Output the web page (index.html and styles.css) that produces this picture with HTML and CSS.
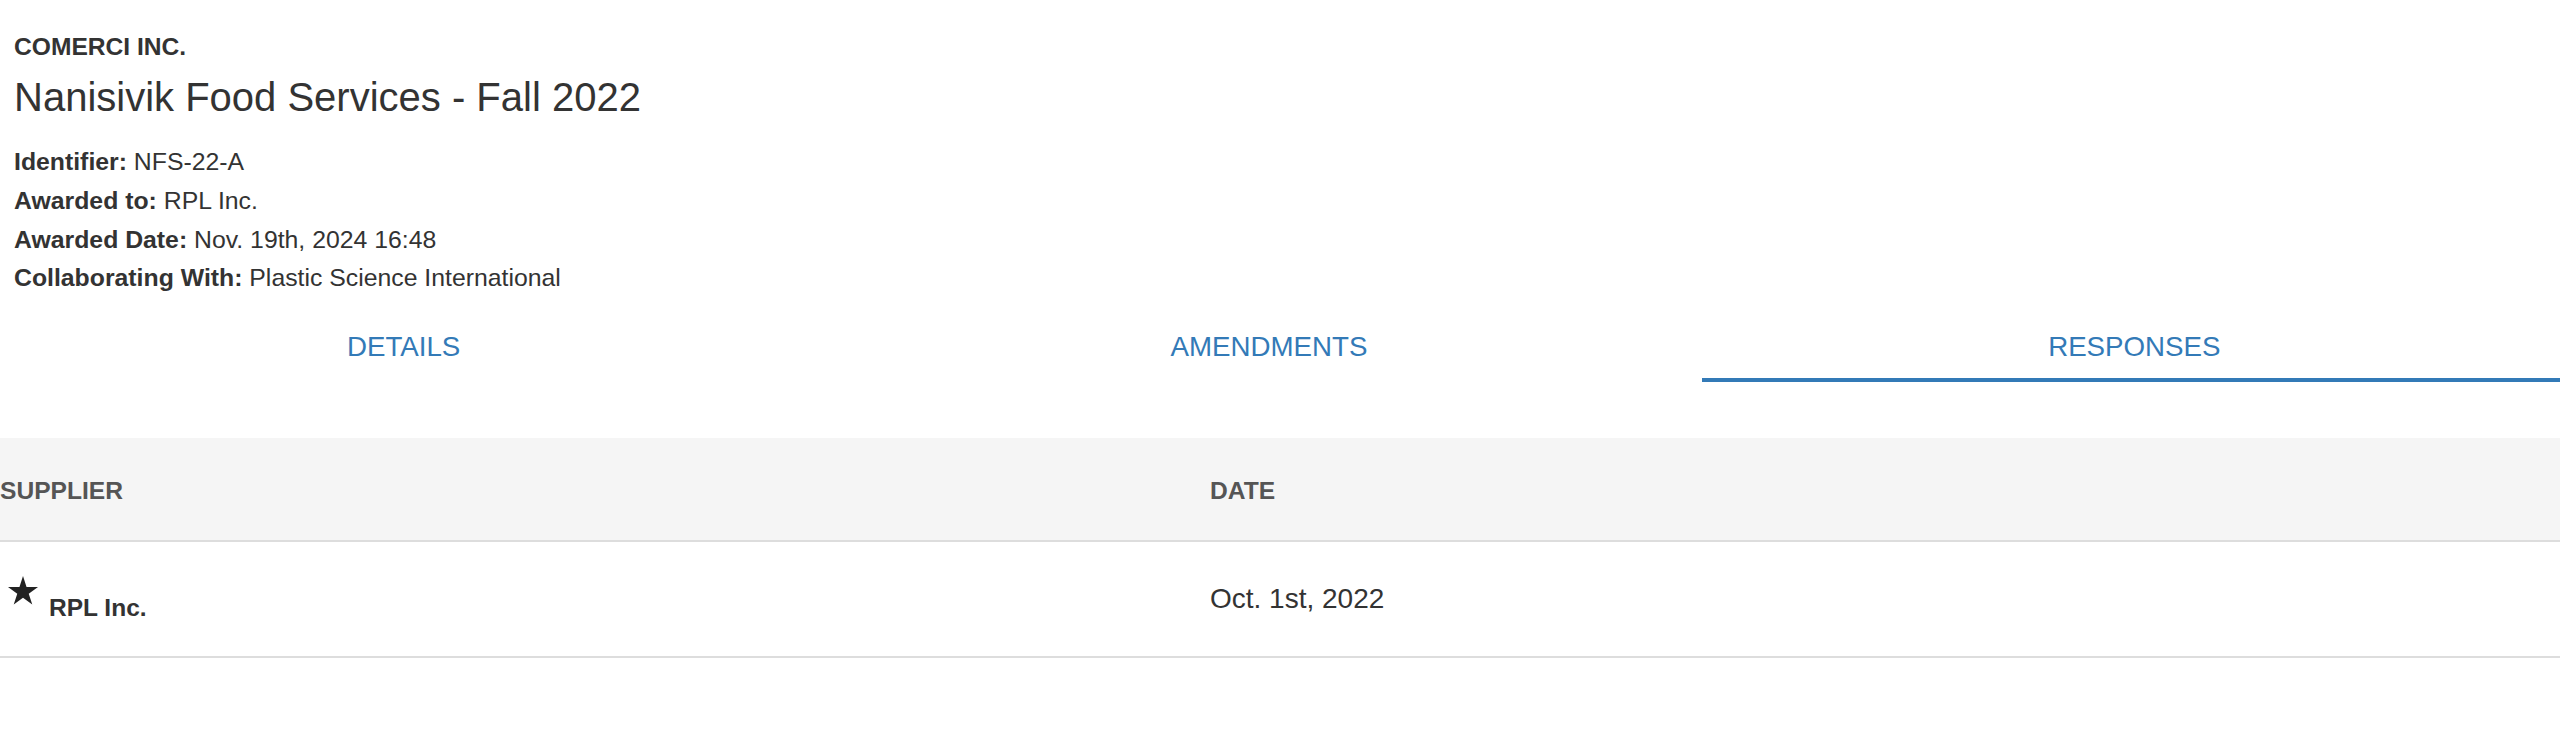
FILE: index.html
```html
<!DOCTYPE html>
<html lang="en">
<head>
<meta charset="utf-8">
<title>Nanisivik Food Services - Fall 2022</title>
<link rel="stylesheet" href="styles.css">
</head>
<body>
<div class="page">
  <header class="summary">
    <div class="company">COMERCI INC.</div>
    <h1 class="title">Nanisivik Food Services - Fall 2022</h1>
    <ul class="facts">
      <li><span class="label">Identifier:</span> NFS-22-A</li>
      <li><span class="label">Awarded to:</span> RPL Inc.</li>
      <li><span class="label">Awarded Date:</span> Nov. 19th, 2024 16:48</li>
      <li><span class="label">Collaborating With:</span> Plastic Science International</li>
    </ul>
  </header>

  <nav class="tabs">
    <a class="tab">DETAILS</a>
    <a class="tab">AMENDMENTS</a>
    <a class="tab tab-active">RESPONSES</a>
  </nav>

  <section class="table">
    <div class="table-head">
      <div class="th">SUPPLIER</div>
      <div class="th">DATE</div>
    </div>
    <div class="table-row">
      <div class="td supplier">
        <svg class="star" width="30" height="29" viewBox="0 0 30 29" aria-hidden="true">
          <polygon points="15,0 18.54,10.9 30,10.9 20.73,17.63 24.27,28.53 15,21.79 5.73,28.53 9.27,17.63 0,10.9 11.46,10.9" fill="#222"/>
        </svg>
        <span class="supplier-name">RPL Inc.</span>
      </div>
      <div class="td date">Oct. 1st, 2022</div>
    </div>
  </section>
</div>
</body>
</html>
```

FILE: styles.css
```css
html, body {
  margin: 0;
  padding: 0;
  background: #ffffff;
}

body {
  font-family: "Liberation Sans", Arial, Helvetica, sans-serif;
  color: #333333;
  overflow-x: hidden;
}

.page {
  width: 100%;
}

.summary {
  padding: 32px 0 0 14px;
}

.company {
  font-size: 24.6px;
  font-weight: bold;
  line-height: 30px;
}

.title {
  margin: 11px 0 0 0;
  font-size: 40px;
  font-weight: normal;
  line-height: 48px;
}

.facts {
  list-style: none;
  margin: 22px 0 0 0;
  padding: 0;
  font-size: 24.8px;
  line-height: 38.8px;
}

.label {
  font-weight: bold;
}

.tabs {
  display: grid;
  grid-template-columns: repeat(3, 1fr);
  width: calc(100% + 36px);
  margin: 20px 0 0 -29px;
}

.tab {
  display: block;
  text-align: center;
  color: #337ab7;
  font-size: 27.7px;
  line-height: 34px;
  padding: 12px 0 14px;
  border-bottom: 4px solid transparent;
  cursor: pointer;
}

.tab-active {
  border-bottom-color: #337ab7;
}

.table {
  margin-top: 56px;
}

.table-head,
.table-row {
  display: grid;
  grid-template-columns: 1210px 1fr;
}

.table-head {
  background: #f5f5f5;
  border-bottom: 2px solid #dddddd;
  height: 104px;
  box-sizing: border-box;
  align-items: start;
}

.th {
  padding-top: 38px;
  font-size: 24.6px;
  font-weight: bold;
  line-height: 30px;
  color: #555555;
}

.table-row {
  height: 116px;
  box-sizing: border-box;
  border-bottom: 2px solid #dddddd;
  align-items: center;
}

.supplier {
  display: flex;
  align-items: flex-start;
  padding-left: 8px;
  gap: 11px;
}

.star {
  display: block;
  flex: none;
}

.supplier-name {
  margin-top: 16.7px;
  font-size: 24.5px;
  font-weight: bold;
  line-height: 30px;
}

.date {
  font-size: 28px;
  line-height: 34px;
}
```
